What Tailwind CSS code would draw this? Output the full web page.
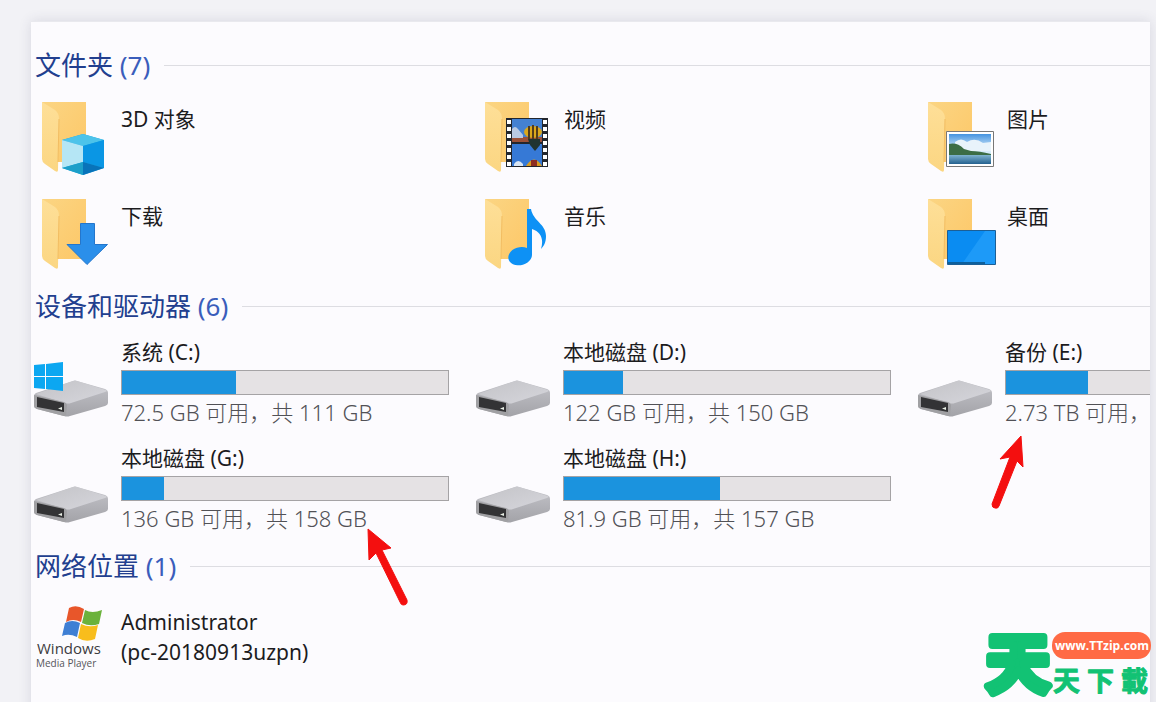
<!DOCTYPE html>
<html lang="zh-CN" class="h-full">
  <head>
    <meta charset="utf-8" />
    <meta name="viewport" content="width=device-width, initial-scale=1" />
    <title>此电脑</title>
    <script src="https://cdn.jsdelivr.net/npm/@tailwindcss/browser@4"></script>
  </head>
  <body class="h-full overflow-hidden bg-[#f2f2f6] font-['Noto_Sans','Noto_Sans_CJK_SC',sans-serif] text-[21px] text-[#1c1c1e]">
    <!-- shared icon shapes -->
    <svg class="absolute size-0" aria-hidden="true">
      <defs>
        <linearGradient id="back" x1="0" y1="0" x2="1" y2="1">
          <stop offset="0" stop-color="#fbd583" />
          <stop offset="1" stop-color="#fdc767" />
        </linearGradient>
        <linearGradient id="flap" x1="0" y1="0" x2="0" y2="1">
          <stop offset="0" stop-color="#fedf98" />
          <stop offset="1" stop-color="#fbd682" />
        </linearGradient>
        <linearGradient id="lid" x1="0" y1="0" x2="1" y2="1">
          <stop offset="0" stop-color="#c3c3c7" />
          <stop offset="1" stop-color="#d6d6dc" />
        </linearGradient>
        <linearGradient id="side" x1="0" y1="0" x2="0" y2="1">
          <stop offset="0" stop-color="#c4c4ca" />
          <stop offset="1" stop-color="#a3a3a8" />
        </linearGradient>
        <linearGradient id="sky" x1="0" y1="0" x2="0" y2="1">
          <stop offset="0" stop-color="#4593e0" />
          <stop offset=".5" stop-color="#d6ecfa" />
        </linearGradient>
        <linearGradient id="sea" x1="0" y1="0" x2="0" y2="1">
          <stop offset="0" stop-color="#7fb3cf" />
          <stop offset="1" stop-color="#24618f" />
        </linearGradient>
      </defs>
      <symbol id="folder" viewBox="0 0 90 90">
        <path d="M11 10H55V70H26Z" fill="url(#back)" />
        <path d="M11 10L24 18Q28 21 28 27L27 78Q27 81 24 79L14 72Q11 70 11 67Z" fill="url(#flap)" />
        <path d="M28 27L27 70" fill="none" stroke="#f2bd62" />
      </symbol>
      <symbol id="drive" viewBox="0 0 90 90">
        <path d="M3 62Q3 60 5 59L42 47Q44 46 46 47L74 55Q77 56 77 59V69Q77 71 74 72L39 82Q36 83 33 82L6 75Q3 74 3 72Z" fill="url(#side)" />
        <path d="M5 60L42 47Q44 46 46 47L75 56Q77 57 74 58L40 69Q37 70 34 69Z" fill="url(#lid)" />
        <path d="M3 61L33 68Q36 69 36 72L35 81L33 82L6 75Q3 74 3 72Z" fill="#a0a0a3" />
        <path d="M6 63L33 69V78L6 73Z" fill="#333335" />
        <path d="M27 74.500L31 73V76Z" fill="#e8eee4" />
      </symbol>
    </svg>

    <main class="relative ml-[31px] mr-[6px] mt-[21px] h-full overflow-hidden border-t border-[#e9e9ee] bg-[#fcfbfe] pt-[23px] shadow-[0_0_12px_rgba(60,60,90,0.14)]">
      <section>
        <h2 class="flex h-10 items-center gap-[14px] pl-1 text-[26px] text-[#223f8f]">
          <span class="whitespace-nowrap">文件夹 <span class="text-[#3a5dbb]">(7)</span></span>
          <span class="h-px flex-1 bg-[#dddde2]"></span>
        </h2>
        <ul class="grid grid-cols-[repeat(3,443px)] pt-[7px]">
          <li class="flex h-[97px]">
            <svg class="size-[90px] shrink-0" viewBox="0 0 90 90">
              <use href="#folder" />
              <path d="M31 48L52 42L73 48V76L52 83L31 76Z" fill="#18a4e0" />
              <path d="M31 48L52 42L73 48L52 54Z" fill="#4cc3ea" />
              <path d="M31 48L52 54V70L31 76Z" fill="#b5e6f5" />
              <path d="M52 54L73 48V76L52 70Z" fill="#0a96e4" />
              <path d="M31 76L52 70V83Z" fill="#1c9fc9" />
              <path d="M52 70L73 76L52 83Z" fill="#0873ba" />
            </svg>
            <span class="pt-[9px] leading-9">3D 对象</span>
          </li>
          <li class="flex h-[97px]">
            <svg class="size-[90px] shrink-0" viewBox="0 0 90 90">
              <use href="#folder" />
              <path d="M32 26H74V75H32Z" fill="#23262d" />
              <path d="M38 27H68V50H38Z" fill="#4481d2" />
              <path d="M38 52H68V74H38Z" fill="#3679d6" />
              <path d="M38 45H68V50H38Z" fill="#9b5038" />
              <path d="M38 37Q41 33 44 37L49 43V46H38Z" fill="#b9c9e2" />
              <path d="M40 72Q44 66 49 72V74H40Z" fill="#d9e5f2" />
              <ellipse cx="59" cy="40" rx="9" ry="6" fill="#dba71b" />
              <path d="M55 34V47M59 33V48M63 34V47" stroke="#533c1a" stroke-width="2" />
              <path d="M54 47H66V53L61 59L56 53Z" fill="#20342f" />
              <path d="M52 74Q60 61 68 74Z" fill="#d89c22" />
              <path d="M57 68H63V74H57Z" fill="#8e2d22" />
              <path d="M35 28V74M71 28V74" stroke="#fff" stroke-width="4" stroke-dasharray="4 3" />
            </svg>
            <span class="pt-[9px] leading-9">视频</span>
          </li>
          <li class="flex h-[97px]">
            <svg class="size-[90px] shrink-0" viewBox="0 0 90 90">
              <use href="#folder" />
              <path d="M29.500 39.500H76.500V74.500H29.500Z" fill="#fff" stroke="#777" />
              <path d="M32 42H74V72H32Z" fill="url(#sky)" />
              <path d="M38 50Q44 45 50 50Q58 45 66 51L74 50V59H38Z" fill="#e8f3fb" />
              <path d="M32 52Q40 50 47 57L54 59Q62 59 74 62V65H32Z" fill="#3c6d45" />
              <path d="M32 63H74V72H32Z" fill="url(#sea)" />
            </svg>
            <span class="pt-[9px] leading-9">图片</span>
          </li>
          <li class="flex h-[97px]">
            <svg class="size-[90px] shrink-0" viewBox="0 0 90 90">
              <use href="#folder" />
              <path d="M49.500 34.500H63.500V55.500H76.500L56 75.500L36 55.500H49.500Z" fill="#2b8fea" stroke="#2476cc" />
            </svg>
            <span class="pt-[9px] leading-9">下载</span>
          </li>
          <li class="flex h-[97px]">
            <svg class="size-[90px] shrink-0" viewBox="0 0 90 90">
              <use href="#folder" />
              <path d="M53 20H57C59 32 72 35 72 47C72 53 70 57 67 60C70 50 67 43 58 40V66A12 9 -14 1 1 53 59Z" fill="#0d91f5" />
            </svg>
            <span class="pt-[9px] leading-9">音乐</span>
          </li>
          <li class="flex h-[97px]">
            <svg class="size-[90px] shrink-0" viewBox="0 0 90 90">
              <use href="#folder" />
              <path d="M30.500 41.500H78.500V75.500H30.500Z" fill="#0a8cf2" stroke="#1c5f96" />
              <path d="M45 75L68 42H78V75Z" fill="#1d9af8" />
              <path d="M31 73H68V75H31Z" fill="#0d5f9d" />
            </svg>
            <span class="pt-[9px] leading-9">桌面</span>
          </li>
        </ul>
      </section>

      <section>
        <h2 class="flex h-10 items-center gap-[14px] pl-1 text-[26px] text-[#223f8f]">
          <span class="whitespace-nowrap">设备和驱动器 <span class="text-[#3a5dbb]">(6)</span></span>
          <span class="h-px flex-1 bg-[#dddde2]"></span>
        </h2>
        <ul class="grid grid-cols-[repeat(3,442px)] pt-2">
          <li class="flex h-[106px]">
            <svg class="size-[90px] shrink-0" viewBox="0 0 90 90">
              <use href="#drive" />
              <path d="M3 31L14 30V42H3ZM15 30L32 28V42H15ZM3 43H14V55L3 54ZM15 43H32V57L15 55Z" fill="#0ca7f1" />
            </svg>
            <div class="w-[328px] whitespace-nowrap">
              <div class="leading-9">系统 (C:)</div>
              <div class="h-[25px] border border-[#a5a3a5] bg-[#e5e2e4]"><div class="h-full bg-[#1b93de]" style="width: 35%"></div></div>
              <div class="text-[22px] font-light leading-[34px] text-[#515156]">72.5 GB 可用，共 111 GB</div>
            </div>
          </li>
          <li class="flex h-[106px]">
            <svg class="size-[90px] shrink-0"><use href="#drive" /></svg>
            <div class="w-[328px] whitespace-nowrap">
              <div class="leading-9">本地磁盘 (D:)</div>
              <div class="h-[25px] border border-[#a5a3a5] bg-[#e5e2e4]"><div class="h-full bg-[#1b93de]" style="width: 18%"></div></div>
              <div class="text-[22px] font-light leading-[34px] text-[#515156]">122 GB 可用，共 150 GB</div>
            </div>
          </li>
          <li class="relative flex h-[106px]">
            <svg class="size-[90px] shrink-0"><use href="#drive" /></svg>
            <div class="w-[328px] whitespace-nowrap">
              <div class="leading-9">备份 (E:)</div>
              <div class="h-[25px] border border-[#a5a3a5] bg-[#e5e2e4]"><div class="h-full bg-[#1b93de]" style="width: 25%"></div></div>
              <div class="text-[22px] font-light leading-[34px] text-[#515156]">2.73 TB 可用，</div>
            </div>
            <svg class="absolute left-[70px] top-[100px] h-20 w-11" viewBox="0 0 44 80" fill="#f40f0f">
              <path d="M36 2L15 25L25 23L7 70Q7 74 10 74Q13 75 14 72L32 27L38 33Z" stroke="#f40f0f" stroke-linejoin="round" />
            </svg>
          </li>
          <li class="relative flex h-[106px]">
            <svg class="size-[90px] shrink-0"><use href="#drive" /></svg>
            <div class="w-[328px] whitespace-nowrap">
              <div class="leading-9">本地磁盘 (G:)</div>
              <div class="h-[25px] border border-[#a5a3a5] bg-[#e5e2e4]"><div class="h-full bg-[#1b93de]" style="width: 13%"></div></div>
              <div class="text-[22px] font-light leading-[34px] text-[#515156]">136 GB 可用，共 158 GB</div>
            </div>
            <svg class="absolute left-[334px] top-[86px] h-20 w-11" viewBox="0 0 44 80" fill="#f40f0f">
              <path d="M3 3L26 22L17 24L42 74Q43 79 38 79Q36 79 35 76L11 27L4 34Z" stroke="#f40f0f" stroke-linejoin="round" />
            </svg>
          </li>
          <li class="flex h-[106px]">
            <svg class="size-[90px] shrink-0"><use href="#drive" /></svg>
            <div class="w-[328px] whitespace-nowrap">
              <div class="leading-9">本地磁盘 (H:)</div>
              <div class="h-[25px] border border-[#a5a3a5] bg-[#e5e2e4]"><div class="h-full bg-[#1b93de]" style="width: 48%"></div></div>
              <div class="text-[22px] font-light leading-[34px] text-[#515156]">81.9 GB 可用，共 157 GB</div>
            </div>
          </li>
        </ul>
      </section>

      <section>
        <h2 class="flex h-10 items-center gap-[14px] pl-1 text-[26px] text-[#223f8f]">
          <span class="whitespace-nowrap">网络位置 <span class="text-[#3a5dbb]">(1)</span></span>
          <span class="h-px flex-1 bg-[#dddde2]"></span>
        </h2>
        <div class="flex pt-5">
          <svg class="h-[66px] w-[90px] shrink-0" viewBox="0 0 90 66">
            <path d="M38 2Q45 -2 53 3L50 16Q42 12 35 16Z" fill="#e8562a" />
            <path d="M54 4Q61 8 71 4L68 18Q59 21 51 17Z" fill="#6bb23c" />
            <path d="M34 17Q41 13 49 17L46 31Q38 27 31 30Z" fill="#3f7fd4" />
            <path d="M50 18Q58 22 67 19L64 33Q55 37 47 32Z" fill="#f8bd1c" />
            <text x="6" y="48" font-family="Open Sans" font-size="15" fill="#3c3c40">Windows</text>
            <text x="5" y="61" font-family="Open Sans" font-size="10" fill="#55555a">Media Player</text>
          </svg>
          <div class="pt-px leading-[30px]">
            <div>Administrator</div>
            <div>(pc-20180913uzpn)</div>
          </div>
        </div>
      </section>
    </main>

    <a href="#" class="absolute bottom-0 right-0 block" aria-label="天天下載">
      <svg class="h-[80px] w-[176px]" viewBox="0 0 176 80" font-family="Noto Sans CJK TC" font-weight="700" fill="#12c274" stroke="#12c274" stroke-linejoin="round">
        <text x="6" y="65" font-size="64" stroke-width="8">天</text>
        <text x="73" y="69" font-size="27" stroke-width="1">天</text>
        <text x="107" y="69" font-size="27" stroke-width="1">下</text>
        <text x="141" y="69" font-size="27" stroke-width="1">載</text>
        <rect x="72" y="10" width="99" height="27" rx="13" fill="#ff6a45" stroke="none" />
        <text x="122" y="28" text-anchor="middle" font-family="Open Sans" font-size="12" fill="#fff" stroke="none">www.TTzip.com</text>
      </svg>
    </a>
  </body>
</html>
